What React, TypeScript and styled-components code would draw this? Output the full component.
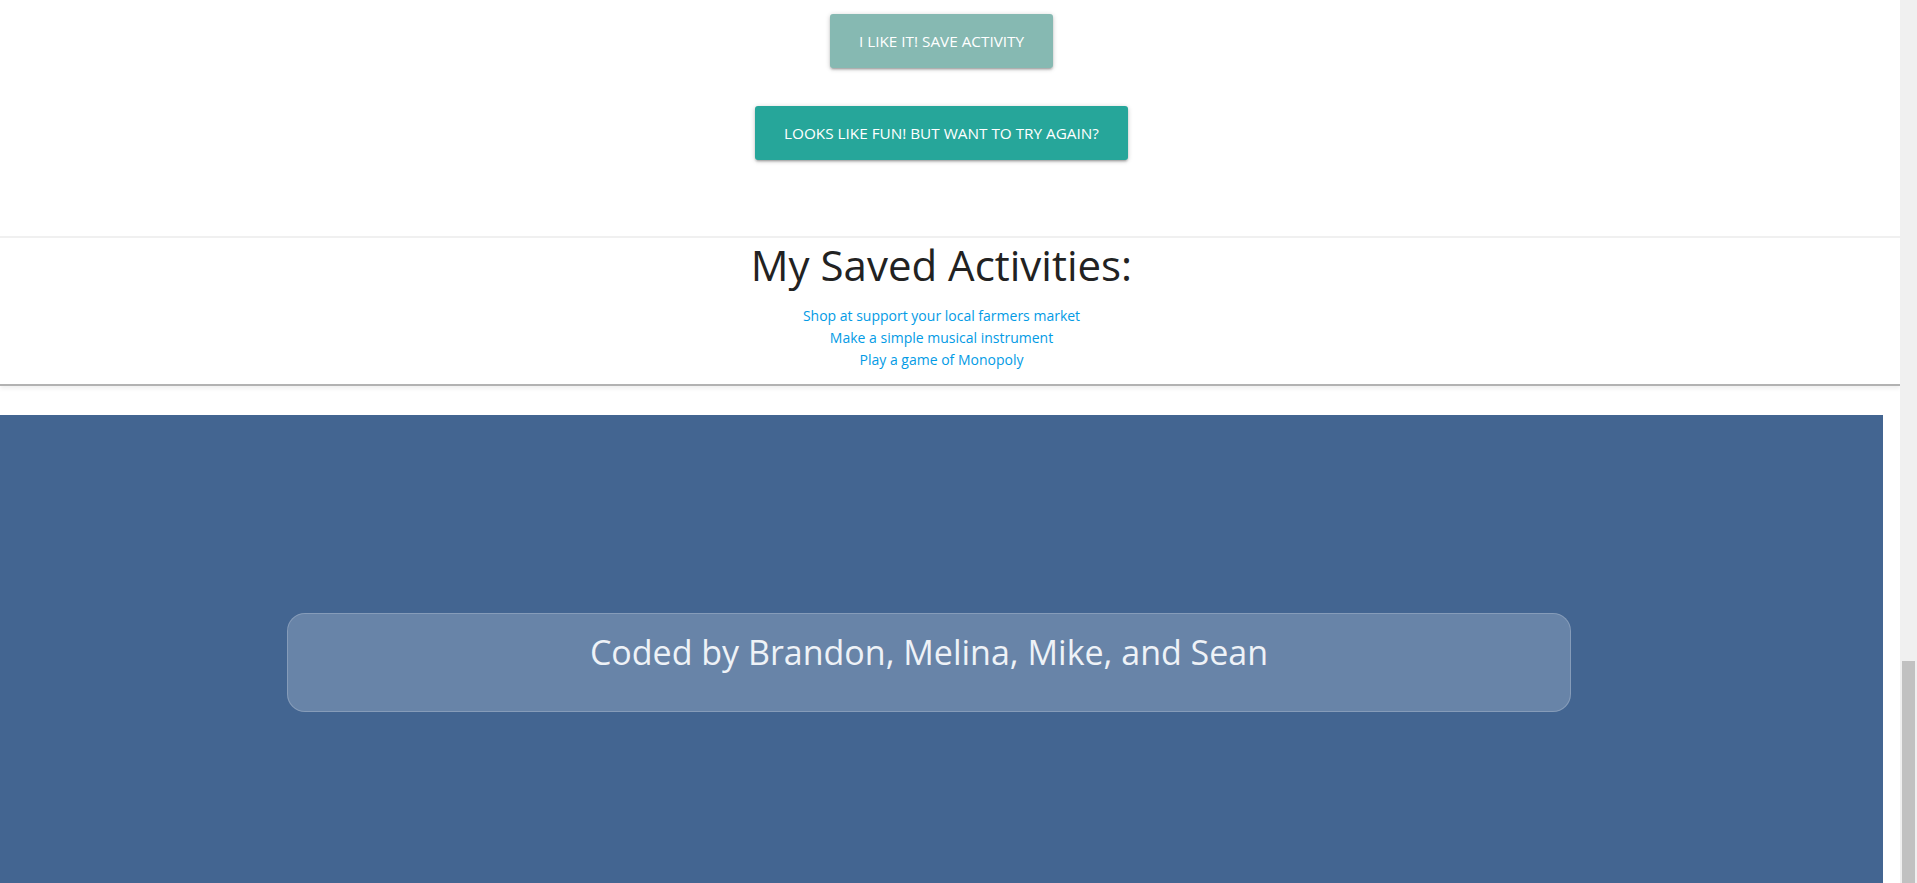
import React from 'react';
import styled, { createGlobalStyle } from 'styled-components';

const GlobalStyle = createGlobalStyle`
  html, body {
    margin: 0;
    padding: 0;
    height: 100%;
    overflow: hidden;
    background: #ffffff;
  }
  body {
    font-family: "Open Sans", "Noto Sans", sans-serif;
  }
`;

const savedActivities = [
  'Shop at support your local farmers market',
  'Make a simple musical instrument',
  'Play a game of Monopoly',
];

const Page = styled.div`
  display: flex;
  height: 100vh;
  width: 100%;
`;

const Main = styled.div`
  flex: 1;
  display: flex;
  flex-direction: column;
  min-width: 0;
`;

const Actions = styled.div`
  display: flex;
  flex-direction: column;
  align-items: center;
  gap: 38px;
  padding: 14px 17px 76px 0;
`;

const ActionButton = styled.button<{ $muted?: boolean }>`
  height: 54px;
  padding: 0 29px;
  border: none;
  border-radius: 3px;
  background: ${(p) => (p.$muted ? '#86b9b2' : '#26a69a')};
  color: #ffffff;
  font-family: inherit;
  font-size: 15.3px;
  text-transform: uppercase;
  box-shadow: 0 2px 2px 0 rgba(0, 0, 0, 0.14), 0 3px 1px -2px rgba(0, 0, 0, 0.12),
    0 1px 5px 0 rgba(0, 0, 0, 0.2);
  cursor: pointer;
`;

const SavedSection = styled.section`
  display: flex;
  flex-direction: column;
  align-items: center;
  height: 146px;
  padding-right: 17px;
  border-top: 2px solid #f0f0f0;
  border-bottom: 2px solid #b2b2b2;
  box-shadow: 0 3px 4px rgba(0, 0, 0, 0.06);
`;

const SavedTitle = styled.h2`
  margin: 3px 0 0;
  font-size: 42px;
  font-weight: 400;
  line-height: 48px;
  color: #222222;
`;

const SavedList = styled.ul`
  margin: 16px 0 0;
  padding: 0;
  list-style: none;
  text-align: center;
  font-size: 14px;
  line-height: 22px;
`;

const SavedLink = styled.a`
  color: #039be5;
  text-decoration: none;
`;

const Footer = styled.footer`
  flex: 1;
  margin: 29px 17px 0 0;
  padding: 198px 312px 0 287px;
  background: #436591;
`;

const Credits = styled.div`
  height: 99px;
  box-sizing: border-box;
  padding-top: 14px;
  border: 1px solid rgba(255, 255, 255, 0.2);
  border-radius: 18px;
  background: #6884a8;
  color: #eef2f7;
  font-size: 34px;
  line-height: 48px;
  text-align: center;
`;

const ScrollTrack = styled.div`
  width: 17px;
  display: flex;
  flex-direction: column;
  justify-content: flex-end;
  align-items: center;
  background: #f0f0f0;
`;

const ScrollThumb = styled.div`
  width: 13px;
  height: 222px;
  background: #c1c1c1;
`;

export default function App() {
  return (
    <>
      <GlobalStyle />
      <Page>
        <Main>
          <Actions>
            <ActionButton $muted>I like it! Save activity</ActionButton>
            <ActionButton>Looks like fun! But want to try again?</ActionButton>
          </Actions>
          <SavedSection>
            <SavedTitle>My Saved Activities:</SavedTitle>
            <SavedList>
              {savedActivities.map((a) => (
                <li key={a}>
                  <SavedLink href="#">{a}</SavedLink>
                </li>
              ))}
            </SavedList>
          </SavedSection>
          <Footer>
            <Credits>Coded by Brandon, Melina, Mike, and Sean</Credits>
          </Footer>
        </Main>
        <ScrollTrack>
          <ScrollThumb />
        </ScrollTrack>
      </Page>
    </>
  );
}
